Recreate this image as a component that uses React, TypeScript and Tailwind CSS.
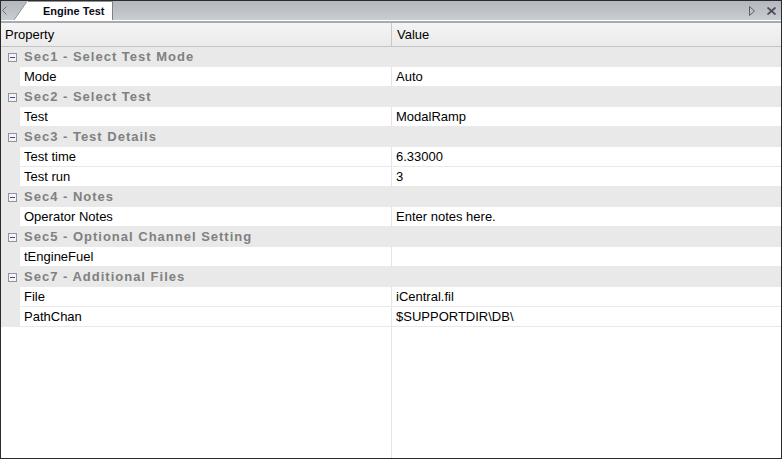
import React from "react";

type Row =
  | { kind: "cat"; label: string }
  | { kind: "prop"; name: string; value: string };

const rows: Row[] = [
  { kind: "cat", label: "Sec1 - Select Test Mode" },
  { kind: "prop", name: "Mode", value: "Auto" },
  { kind: "cat", label: "Sec2 - Select Test" },
  { kind: "prop", name: "Test", value: "ModalRamp" },
  { kind: "cat", label: "Sec3 - Test Details" },
  { kind: "prop", name: "Test time", value: "6.33000" },
  { kind: "prop", name: "Test run", value: "3" },
  { kind: "cat", label: "Sec4 - Notes" },
  { kind: "prop", name: "Operator Notes", value: "Enter notes here." },
  { kind: "cat", label: "Sec5 - Optional Channel Setting" },
  { kind: "prop", name: "tEngineFuel", value: "" },
  { kind: "cat", label: "Sec7 - Additional Files" },
  { kind: "prop", name: "File", value: "iCentral.fil" },
  { kind: "prop", name: "PathChan", value: "$SUPPORTDIR\\DB\\" },
];

function MinusBox() {
  return (
    <svg width="9" height="9" viewBox="0 0 9 9" className="shrink-0">
      <rect x="0.5" y="0.5" width="8" height="8" fill="#f4f4f4" stroke="#949494" />
      <rect x="2" y="4" width="5" height="1" fill="#2f4fa8" />
    </svg>
  );
}

export default function App() {
  return (
    <div
      className="w-[782px] h-[459px] flex flex-col border border-[#2b2b2b] bg-white overflow-hidden text-[13px] text-black"
      style={{ fontFamily: '"Liberation Sans", Arial, sans-serif' }}
    >
      {/* Tab strip */}
      <div className="h-[19px] flex items-end bg-gradient-to-b from-[#b3b7be] to-[#c9ccd1] shrink-0">
        <div className="w-[13px] h-full flex items-center pl-[1px]">
          <svg width="5" height="9" viewBox="0 0 5 9">
            <path d="M4.5 0.5 L0.5 4.5 L4.5 8.5" fill="none" stroke="#6b6f75" />
          </svg>
        </div>
        <svg width="14" height="19" viewBox="0 0 14 19" className="shrink-0">
          <polygon points="0,19 13,0 14,0 14,19" fill="#ffffff" />
          <line x1="0" y1="19" x2="13" y2="0.5" stroke="#8e9298" strokeWidth="1" />
        </svg>
        <div className="h-full w-[85px] bg-white border-t border-[#8e9298] border-r border-r-[#7d8187] flex items-center pl-[15px] text-[11px] font-bold text-[#0b0b1a]">
          Engine Test
        </div>
        <div className="flex-1" />
        <div className="h-full flex items-center gap-[12px] pr-[5px]">
          <svg width="6" height="10" viewBox="0 0 6 10">
            <path d="M0.5 0.5 L5.5 5 L0.5 9.5 Z" fill="none" stroke="#5c6066" />
          </svg>
          <svg width="9" height="8" viewBox="0 0 9 8">
            <path d="M0.5 0.5 L8.5 7.5 M8.5 0.5 L0.5 7.5" stroke="#4a4d52" strokeWidth="1.8" />
          </svg>
        </div>
      </div>
      <div className="h-[1px] bg-white shrink-0" />
      <div className="h-[2px] bg-[#a7abb1] shrink-0" />

      {/* Header */}
      <div className="h-[24px] flex shrink-0 bg-gradient-to-b from-[#f4f4f4] to-[#ebebeb] border-b border-[#c4c4c4]">
        <div className="w-[391px] flex items-center pl-[4px] pt-[1px] border-r border-[#c8c8c8]">Property</div>
        <div className="flex-1 flex items-center pl-[5px] pt-[1px]">Value</div>
      </div>

      {/* Grid rows */}
      <div className="flex flex-col shrink-0">
        {rows.map((r, i) =>
          r.kind === "cat" ? (
            <div key={i} className="h-[20px] flex items-center bg-[#e9e9e9]">
              <div className="w-[19px] flex justify-center pl-[3px]">
                <MinusBox />
              </div>
              <span className="pl-[4px] font-bold text-[#808080] tracking-[1px]">{r.label}</span>
            </div>
          ) : (
            <div key={i} className="h-[20px] flex bg-[#e9e9e9]">
              <div className="w-[19px]" />
              <div className="w-[372px] h-[19px] bg-white flex items-center pl-[4px] border-r border-[#e4e4e4]">
                {r.name}
              </div>
              <div className="flex-1 h-[19px] bg-white flex items-center pl-[4px]">{r.value}</div>
            </div>
          )
        )}
      </div>

      {/* Empty area */}
      <div className="flex-1 flex">
        <div className="w-[391px] border-r border-[#e4e4e4]" />
        <div className="flex-1" />
      </div>
    </div>
  );
}
